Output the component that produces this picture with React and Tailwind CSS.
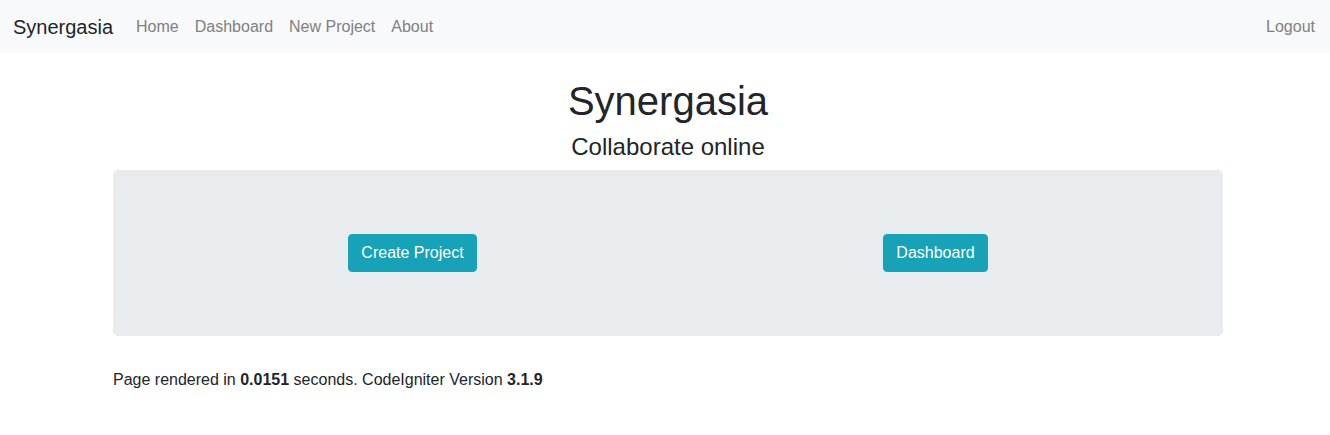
const App = () => {
    return (
        <div className="min-h-screen bg-white text-[#212529] text-base" style={{ fontFamily: '"Liberation Sans", Arial, sans-serif' }}>
            {/* Navbar */}
            <nav className="h-[53px] bg-[#f8f9fa] flex items-center pl-[13px] pr-[15px]">
                <a href="#" className="text-[20px] text-[#212529] mr-[15px]">Synergasia</a>
                <div className="flex items-center">
                    <a href="#" className="px-2 text-[#808080]">Home</a>
                    <a href="#" className="px-2 text-[#808080]">Dashboard</a>
                    <a href="#" className="px-2 text-[#808080]">New Project</a>
                    <a href="#" className="px-2 text-[#808080]">About</a>
                </div>
                <a href="#" className="ml-auto text-[#808080]">Logout</a>
            </nav>

            <div className="w-[1110px] ml-[113px]">
                {/* Heading */}
                <h1 className="mt-6 mb-2 text-[40px] leading-[48px] text-center">Synergasia</h1>
                <h4 className="mb-2 text-[24px] leading-[28.8px] text-center">Collaborate online</h4>

                {/* Jumbotron */}
                <div className="bg-[#e9ecef] rounded-[5px] px-8 py-16 mb-8 flex justify-around">
                    <a href="#" className="bg-[#17a2b8] border border-[#17a2b8] text-white rounded px-3 py-1.5 leading-6">Create Project</a>
                    <a href="#" className="bg-[#17a2b8] border border-[#17a2b8] text-white rounded px-3 py-1.5 leading-6">Dashboard</a>
                </div>

                <p className="leading-6">
                    Page rendered in <strong>0.0151</strong> seconds. CodeIgniter Version <strong>3.1.9</strong>
                </p>
            </div>
        </div>
    );
};

export default App;
